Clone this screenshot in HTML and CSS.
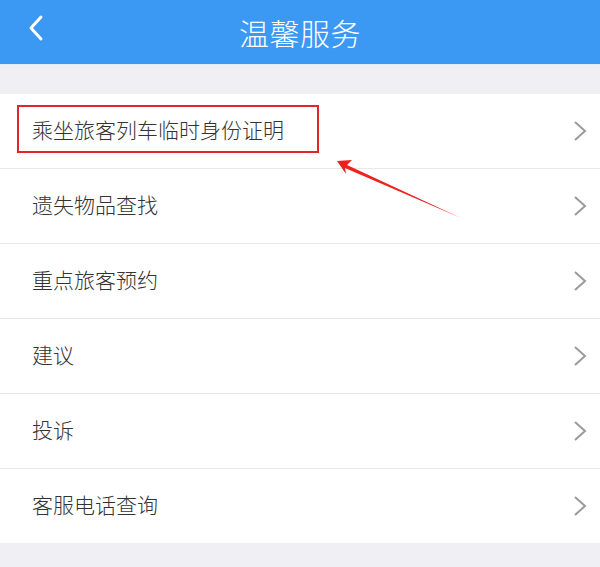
FILE: index.html
```html
<!DOCTYPE html>
<html lang="zh">
<head>
<meta charset="utf-8">
<link rel="stylesheet" href="styles.css">
</head>
<body>
<div class="page">
  <header class="topbar">
    <svg class="back" width="20" height="28" viewBox="0 0 20 28"><path d="M15 3 L5 14 L15 25" fill="none" stroke="#fff" stroke-width="3" stroke-linecap="round" stroke-linejoin="round"/></svg>
    <h1 class="title">温馨服务</h1>
  </header>
  <div class="spacer"></div>
  <ul class="list">
    <li class="row"><span class="label highlight">乘坐旅客列车临时身份证明</span><svg class="chev" width="14" height="22" viewBox="0 0 14 22"><path d="M2 2 L12 11 L2 20" fill="none" stroke="#9a9a9a" stroke-width="2"/></svg></li>
    <li class="row"><span class="label">遗失物品查找</span><svg class="chev" width="14" height="22" viewBox="0 0 14 22"><path d="M2 2 L12 11 L2 20" fill="none" stroke="#9a9a9a" stroke-width="2"/></svg></li>
    <li class="row"><span class="label">重点旅客预约</span><svg class="chev" width="14" height="22" viewBox="0 0 14 22"><path d="M2 2 L12 11 L2 20" fill="none" stroke="#9a9a9a" stroke-width="2"/></svg></li>
    <li class="row"><span class="label">建议</span><svg class="chev" width="14" height="22" viewBox="0 0 14 22"><path d="M2 2 L12 11 L2 20" fill="none" stroke="#9a9a9a" stroke-width="2"/></svg></li>
    <li class="row"><span class="label">投诉</span><svg class="chev" width="14" height="22" viewBox="0 0 14 22"><path d="M2 2 L12 11 L2 20" fill="none" stroke="#9a9a9a" stroke-width="2"/></svg></li>
    <li class="row"><span class="label">客服电话查询</span><svg class="chev" width="14" height="22" viewBox="0 0 14 22"><path d="M2 2 L12 11 L2 20" fill="none" stroke="#9a9a9a" stroke-width="2"/></svg></li>
  </ul>
  <svg class="arrow" width="600" height="567" viewBox="0 0 600 567">
    <polygon points="337,161 352,160 347,165 461,218 345,168 346,174" fill="#f0201c"/>
  </svg>
</div>
</body>
</html>
```
FILE: styles.css
```css
* { box-sizing: border-box; }
html, body { margin: 0; padding: 0; }
body {
  width: 600px;
  height: 567px;
  overflow: hidden;
  background: #efeff4;
  font-family: "Noto Sans CJK SC", "Noto Sans", sans-serif;
}
.page { position: relative; width: 600px; height: 567px; }
.topbar {
  height: 64px;
  background: #3b99f4;
  display: flex;
  align-items: center;
  justify-content: center;
  position: relative;
}
.back { position: absolute; left: 26px; top: 14px; }
.title {
  margin: 0;
  color: #fff;
  font-size: 30px;
  font-weight: 300;
  line-height: 1;
  letter-spacing: 0.5px;
}
.spacer { height: 30px; background: #efeff4; border-top: 1px solid #e2ecf8; }
.list { list-style: none; margin: 0; padding: 0; background: #fff; }
.row {
  height: 75px;
  display: flex;
  align-items: center;
  justify-content: space-between;
  padding: 0 13px 4px 32px;
  border-bottom: 1px solid #e8e8e8;
}
.row:last-child { border-bottom: none; height: 74px; }
.chev { position: relative; top: 2px; display: block; }
.label {
  font-size: 21px;
  font-weight: 300;
  color: #333;
  line-height: 1;
}
.highlight {
  outline: 2px solid #e1262b;
  outline-offset: 0;
  padding: 12px 33px 11px 13px;
  margin-left: -13px;
}
.arrow { position: absolute; left: 0; top: 0; pointer-events: none; }
```
